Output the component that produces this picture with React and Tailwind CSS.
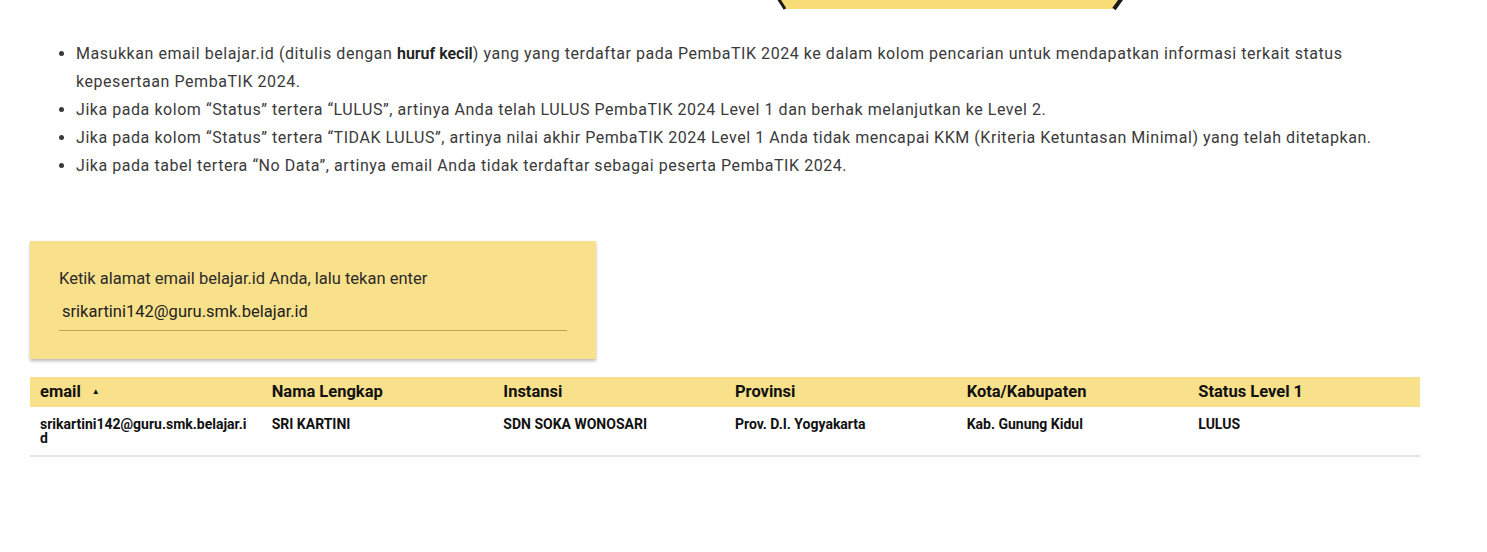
const ROWS = [
  {
    email: 'srikartini142@guru.smk.belajar.id',
    nama: 'SRI KARTINI',
    instansi: 'SDN SOKA WONOSARI',
    provinsi: 'Prov. D.I. Yogyakarta',
    kota: 'Kab. Gunung Kidul',
    status: 'LULUS',
  },
]

const COLS = [
  { key: 'email', label: 'email', sort: true },
  { key: 'nama', label: 'Nama Lengkap' },
  { key: 'instansi', label: 'Instansi' },
  { key: 'provinsi', label: 'Provinsi' },
  { key: 'kota', label: 'Kota/Kabupaten' },
  { key: 'status', label: 'Status Level 1' },
]

export default function App() {
  return (
    <div className="relative w-[1487px] h-[552px] bg-white overflow-hidden font-['Roboto',sans-serif] text-[#212121]">
      {/* bottom of the hexagon banner */}
      <div className="absolute left-[774px] top-0">
        <svg width="352" height="11" viewBox="0 0 352 11">
          <polygon points="2,-2 350,-2 342,9 10,9" fill="#f7dc78" />
          <line x1="4" y1="-2" x2="11" y2="9" stroke="#1a1a1a" strokeWidth="3" />
          <line x1="348" y1="-2" x2="340" y2="9" stroke="#1a1a1a" strokeWidth="4" />
        </svg>
      </div>

      <ul className="list-disc pl-[76px] pt-[40px] w-[1385px] text-[16px] leading-[28px] text-[#3a3a3a] tracking-[0.55px]">
        <li>
          Masukkan email belajar.id (ditulis dengan <b className="font-semibold text-[#222] tracking-normal">huruf kecil</b>) yang yang terdaftar pada PembaTIK 2024 ke dalam kolom pencarian untuk mendapatkan informasi terkait status kepesertaan PembaTIK 2024.
        </li>
        <li>Jika pada kolom “Status” tertera “LULUS”, artinya Anda telah LULUS PembaTIK 2024 Level 1 dan berhak melanjutkan ke Level 2.</li>
        <li>Jika pada kolom “Status” tertera “TIDAK LULUS”, artinya nilai akhir PembaTIK 2024 Level 1 Anda tidak mencapai KKM (Kriteria Ketuntasan Minimal) yang telah ditetapkan.</li>
        <li>Jika pada tabel tertera “No Data”, artinya email Anda tidak terdaftar sebagai peserta PembaTIK 2024.</li>
      </ul>

      <div className="ml-[30px] mt-[61px] w-[566px] bg-[#f9e08a] shadow-[0_2px_3px_rgba(0,0,0,0.28)] px-[29px] pt-[28px] pb-[28px]">
        <div className="text-[16.5px] leading-[20px] text-[#2b2b2b]">Ketik alamat email belajar.id Anda, lalu tekan enter</div>
        <div className="mt-[13px] border-b border-[#b9a35a] pl-[3px] pb-[8px] text-[16.5px] leading-[20px] text-[#222]">
          srikartini142@guru.smk.belajar.id
        </div>
      </div>

      <table className="ml-[30px] mt-[18px] w-[1390px] table-fixed border-collapse">
        <thead>
          <tr className="bg-[#f9e08a] text-left">
            {COLS.map(c => (
              <th key={c.key} className="h-[30px] px-[10px] text-[16.5px] font-bold text-[#111] align-middle">
                <span className="inline-flex items-center gap-[11px]">
                  {c.label}
                  {c.sort && <span className="text-[8px] leading-none">▲</span>}
                </span>
              </th>
            ))}
          </tr>
        </thead>
        <tbody>
          {ROWS.map((r, i) => (
            <tr key={i} className="border-b-2 border-[#e4e4e4]">
              {COLS.map(c => (
                <td key={c.key} className="h-[49px] px-[10px] pt-[10px] pb-[6px] align-top text-[14px] leading-[14px] font-bold text-[#111] break-all">
                  {r[c.key]}
                </td>
              ))}
            </tr>
          ))}
        </tbody>
      </table>
    </div>
  )
}
